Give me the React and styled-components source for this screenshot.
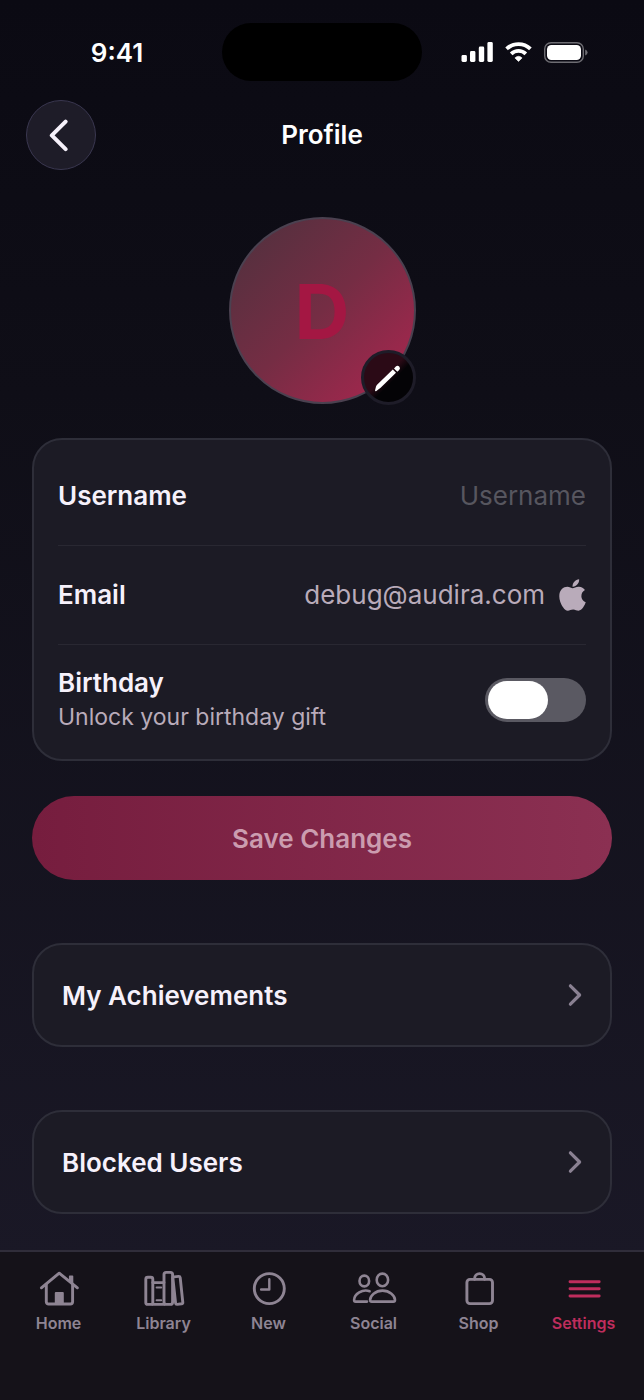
import React, { useState } from 'react'
import styled, { createGlobalStyle } from 'styled-components'
import { FaApple } from 'react-icons/fa'

const color = {
  text: '#f6f1fb',
  muted: '#b9abba',
  icon: '#8e8493',
  placeholder: '#57565f',
  accent: '#bf2d5d',
  surface: '#1c1b25',
  outline: '#2e2e39',
  divider: '#292832',
}

const GlobalStyle = createGlobalStyle`
  *, *::before {
    box-sizing: border-box;
  }
  body {
    margin: 0;
    background: #0c0b13;
    font-family: Inter, 'Liberation Sans', sans-serif;
    -webkit-font-smoothing: antialiased;
  }
  button, input {
    font-family: inherit;
  }
`

const Screen = styled.div`
  display: flex;
  flex-direction: column;
  min-height: 100vh;
  background: linear-gradient(180deg, #0b0a13 0%, #0f0e17 28%, #1a1826 90%);
  color: ${color.text};
`

const StatusBar = styled.div`
  display: grid;
  grid-template-columns: 1fr 200px 1fr;
  align-items: center;
  height: 58px;
  margin-top: 23px;
`

const Time = styled.span`
  padding-left: 12px;
  color: #fff;
  font-size: 26px;
  font-weight: 600;
  text-align: center;
`

const Island = styled.div`
  height: 58px;
  border-radius: 29px;
  background: #000;
`

const StatusIcons = styled.div`
  display: flex;
  align-items: center;
  justify-content: flex-end;
  gap: 12px;
  padding-right: 56px;
`

const Header = styled.header`
  display: grid;
  grid-template-columns: 70px 1fr 70px;
  align-items: center;
  margin-top: 19px;
  padding: 0 26px;
`

const BackButton = styled.button`
  display: flex;
  align-items: center;
  justify-content: center;
  width: 70px;
  height: 70px;
  padding: 0;
  border: 1px solid #3a3750;
  border-radius: 50%;
  background: #1e1c28;
  cursor: pointer;
`

const Title = styled.h1`
  margin: 0;
  color: #fff;
  font-size: 26px;
  font-weight: 600;
  line-height: 32px;
  text-align: center;
`

const Content = styled.main`
  display: flex;
  flex-direction: column;
  padding: 47px 32px 36px;
`

const Avatar = styled.div`
  position: relative;
  display: flex;
  align-items: center;
  justify-content: center;
  align-self: center;
  width: 187px;
  height: 187px;
  border: 2px solid #4b4150;
  border-radius: 50%;
  background: linear-gradient(135deg, #57303f 12%, #752d44 50%, #a0274d 88%);
  color: #a41743;
  font-size: 76px;
  font-weight: 700;
`

const EditButton = styled.button`
  position: absolute;
  right: -2px;
  bottom: -3px;
  display: flex;
  align-items: center;
  justify-content: center;
  width: 55px;
  height: 55px;
  padding: 0;
  border: 3px solid #1e1c28;
  border-radius: 50%;
  background: linear-gradient(135deg, #2b0a16 45%, #040306 58%);
  cursor: pointer;
`

const Card = styled.section`
  margin-top: 34px;
  padding: 6px 24px 4px;
  border: 2px solid ${color.outline};
  border-radius: 30px;
  background: ${color.surface};
`

const Row = styled.div`
  display: flex;
  align-items: center;
  justify-content: space-between;
  gap: 16px;
  min-height: ${({ $tall }) => ($tall ? 111 : 99)}px;

  & + & {
    border-top: 1px solid ${color.divider};
  }
`

const Label = styled.label`
  font-size: 26px;
  font-weight: 600;
  line-height: 32px;
`

const TextInput = styled.input`
  flex: 1;
  min-width: 0;
  padding: 0;
  border: 0;
  outline: none;
  background: none;
  color: ${color.muted};
  font-size: 26px;
  line-height: 32px;
  text-align: right;

  &::placeholder {
    color: ${color.placeholder};
    opacity: 1;
  }
`

const Value = styled.span`
  display: flex;
  align-items: center;
  gap: 14px;
  color: ${color.muted};
  font-size: 26px;
  line-height: 32px;
`

const AppleLogo = styled(FaApple)`
  width: 27px;
  height: 36px;
`

const Stack = styled.div`
  display: flex;
  flex-direction: column;
  gap: 2px;
`

const Hint = styled.span`
  color: ${color.muted};
  font-size: 23px;
  line-height: 32px;
`

const Switch = styled.input.attrs({ type: 'checkbox', role: 'switch' })`
  flex: none;
  appearance: none;
  width: 101px;
  height: 44px;
  margin: 0;
  padding: 3px;
  border-radius: 22px;
  background: ${({ checked }) => (checked ? color.accent : '#5a5962')};
  cursor: pointer;

  &::before {
    content: '';
    display: block;
    width: 60px;
    height: 38px;
    margin-left: ${({ checked }) => (checked ? '35px' : '0')};
    border-radius: 19px;
    background: #fff;
  }
`

const SaveButton = styled.button`
  height: 84px;
  margin-top: 35px;
  border: 0;
  border-radius: 42px;
  background: linear-gradient(90deg, #761d3e, #8b3052);
  color: #cb9caf;
  font-size: 26px;
  font-weight: 600;
`

const LinkCard = styled.a`
  display: flex;
  align-items: center;
  justify-content: space-between;
  height: 104px;
  margin-top: 63px;
  padding: 0 28px;
  border: 2px solid ${color.outline};
  border-radius: 30px;
  background: ${color.surface};
  color: ${color.text};
  font-size: 26px;
  font-weight: 600;
  text-decoration: none;
`

const TabBar = styled.nav`
  display: flex;
  min-height: 150px;
  margin-top: auto;
  padding: 16px 8px 0 6px;
  border-top: 2px solid #302d3a;
  background: #151219;
`

const Tab = styled.a`
  display: flex;
  flex: 1 1 0;
  flex-direction: column;
  align-items: center;
  gap: 5px;
  color: ${({ $active }) => ($active ? color.accent : color.icon)};
  font-size: 16px;
  font-weight: 600;
  line-height: 20px;
  text-decoration: none;
`

const TabIcon = styled.svg.attrs({ viewBox: '0 0 48 40', 'aria-hidden': true })`
  width: 48px;
  height: 40px;
  fill: none;
  stroke: currentColor;
  stroke-width: 2.9;
  stroke-linecap: round;
  stroke-linejoin: round;
`

const tabs = [
  {
    name: 'Home',
    icon: (
      <>
        <path d="M6.4 19.8 24.2 5.2 42.4 19.8" />
        <path d="M11.3 16.5V33.8a2.2 2.2 0 0 0 2.2 2.2h21.9a2.2 2.2 0 0 0 2.2-2.2V16.5" />
        <path d="M34.7 8.4h2.8v7l-2.8-2.3z" fill="currentColor" strokeWidth="1.6" />
        <path d="M19.8 36V25a1 1 0 0 1 1-1h7a1 1 0 0 1 1 1v11z" fill="currentColor" stroke="none" />
      </>
    ),
  },
  {
    name: 'Library',
    icon: (
      <>
        <rect x="5.8" y="9.2" width="7" height="27.2" rx="2" />
        <path d="M12.8 14.6H24M12.8 36.4H24" />
        <path d="M16.6 19.4h4.6M16.6 32.2h4.6" strokeWidth="2" />
        <rect x="24" y="4.4" width="8.6" height="32" rx="2.2" />
        <path d="M32.9 10.3Q32.8 9 34 8.9L38.6 8.4Q40 8.3 40.2 9.6L42.8 34.3Q42.9 35.6 41.6 35.8L37.2 36.4Q35.8 36.5 35.6 35.2Z" />
      </>
    ),
  },
  {
    name: 'New',
    icon: (
      <>
        <circle cx="24.3" cy="20.6" r="15" />
        <path d="M24.3 11.2v10.3h-8.2" strokeWidth="2.4" />
      </>
    ),
  },
  {
    name: 'Social',
    icon: (
      <g strokeWidth="2.6">
        <ellipse cx="14.3" cy="13" rx="4.8" ry="5.4" />
        <ellipse cx="32.4" cy="11.9" rx="5.7" ry="6.3" />
        <path d="M19.6 23.2C12.6 20.6 4.1 26 4.1 32Q4.1 33.6 5.6 33.6H17" />
        <path d="M32.5 22.6c-7.2 0-12.4 5-12.4 9.4q0 1.6 1.6 1.6h21.6q1.7 0 1.7-1.6c0-4.4-5.3-9.4-12.5-9.4z" />
      </g>
    ),
  },
  {
    name: 'Shop',
    icon: (
      <>
        <rect x="11.9" y="11.4" width="25.6" height="24.2" rx="3" />
        <path d="M19.6 11.2v-.6a5 5 0 0 1 10 0v.6" />
      </>
    ),
  },
  {
    name: 'Settings',
    icon: <path d="M10 13.8h29.2M10 20.8h29.2M10 28h29.2" />,
  },
]

const SignalIcon = () => (
  <svg width="32" height="20" viewBox="0 0 32 20" fill="#fff" aria-hidden>
    <rect x="0.5" y="13" width="5.4" height="7" rx="1.4" />
    <rect x="9" y="9" width="5.4" height="11" rx="1.4" />
    <rect x="17.8" y="4.5" width="5.4" height="15.5" rx="1.4" />
    <rect x="26.4" y="0" width="5.4" height="20" rx="1.4" />
  </svg>
)

const WifiIcon = () => (
  <svg width="27" height="20" viewBox="0 0 27 20" fill="none" stroke="#fff" strokeWidth="3.8" aria-hidden>
    <path d="M1.6 6.9A17 17 0 0 1 25.4 6.9" />
    <path d="M6.2 11.8A10.4 10.4 0 0 1 20.8 11.8" />
    <path d="M13.5 19.4 9.9 15.9Q13.5 12.7 17.1 15.9Z" fill="#fff" strokeWidth="0.6" strokeLinejoin="round" />
  </svg>
)

const BatteryIcon = () => (
  <svg width="44" height="21" viewBox="0 0 44 21" aria-hidden>
    <rect x="0.7" y="0.7" width="38.6" height="19.6" rx="6.4" fill="none" stroke="#6d6c72" strokeWidth="1.4" />
    <rect x="3" y="3" width="34" height="15" rx="4.4" fill="#fff" />
    <path d="M41.2 7.4q2.4 1 2.4 3.1t-2.4 3.1z" fill="#6d6c72" />
  </svg>
)

const BackIcon = () => (
  <svg width="24" height="34" viewBox="0 0 24 34" fill="none" aria-hidden>
    <path d="M16.6 3.6 2.8 17.4 16.6 31.2" stroke={color.text} strokeWidth="4" strokeLinecap="round" strokeLinejoin="round" />
  </svg>
)

const PencilIcon = () => (
  <svg width="28" height="28" viewBox="0 0 28 28" fill="#fff" aria-hidden>
    <path d="M1 26.6 2 22.6Q2.4 21.4 3.3 20.5L18.8 5.5 22 8.8 6.6 23.8Q5.7 24.7 4.6 25.2L2.4 27Q1.2 27.6 1 26.6Z" />
    <path d="M20 4.4 21.8 2.5Q23.6 .9 25.2 2.5T25.2 5.9L23.3 7.7Z" />
  </svg>
)

const ChevronIcon = () => (
  <svg width="14" height="24" viewBox="0 0 14 24" fill="none" aria-hidden>
    <path d="M2.4 2.8 11.6 12 2.4 21.2" stroke="#8a8192" strokeWidth="3.2" strokeLinecap="round" strokeLinejoin="round" />
  </svg>
)

export default function App() {
  const [username, setUsername] = useState('')
  const [birthday, setBirthday] = useState(false)

  return (
    <>
      <GlobalStyle />
      <Screen>
        <StatusBar>
          <Time>9:41</Time>
          <Island />
          <StatusIcons>
            <SignalIcon />
            <WifiIcon />
            <BatteryIcon />
          </StatusIcons>
        </StatusBar>
        <Header>
          <BackButton type="button" aria-label="Back">
            <BackIcon />
          </BackButton>
          <Title>Profile</Title>
        </Header>
        <Content>
          <Avatar>
            D
            <EditButton type="button" aria-label="Edit picture">
              <PencilIcon />
            </EditButton>
          </Avatar>
          <Card>
            <Row>
              <Label htmlFor="username">Username</Label>
              <TextInput
                id="username"
                placeholder="Username"
                value={username}
                onChange={(e) => setUsername(e.target.value)}
              />
            </Row>
            <Row>
              <Label as="span">Email</Label>
              <Value>
                debug@audira.com
                <AppleLogo aria-hidden />
              </Value>
            </Row>
            <Row $tall>
              <Stack>
                <Label htmlFor="birthday">Birthday</Label>
                <Hint id="birthday-hint">Unlock your birthday gift</Hint>
              </Stack>
              <Switch
                id="birthday"
                aria-describedby="birthday-hint"
                checked={birthday}
                onChange={(e) => setBirthday(e.target.checked)}
              />
            </Row>
          </Card>
          <SaveButton type="button" disabled>
            Save Changes
          </SaveButton>
          <LinkCard href="#achievements">
            My Achievements
            <ChevronIcon />
          </LinkCard>
          <LinkCard href="#blocked">
            Blocked Users
            <ChevronIcon />
          </LinkCard>
        </Content>
        <TabBar>
          {tabs.map(({ name, icon }) => (
            <Tab
              key={name}
              href={`#${name.toLowerCase()}`}
              $active={name === 'Settings'}
              aria-current={name === 'Settings' ? 'page' : undefined}
            >
              <TabIcon>{icon}</TabIcon>
              {name}
            </Tab>
          ))}
        </TabBar>
      </Screen>
    </>
  )
}
